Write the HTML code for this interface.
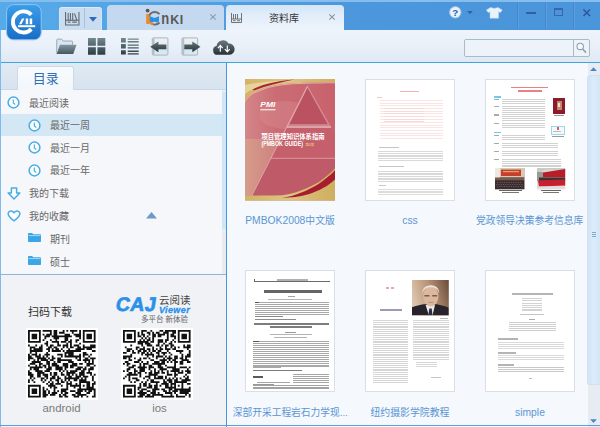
<!DOCTYPE html>
<html lang="zh-CN"><head><meta charset="utf-8"><title>CAJViewer</title>
<style>
html,body{margin:0;padding:0;}
body{width:600px;height:427px;overflow:hidden;background:#f4f8fc;font-family:"Liberation Sans","Noto Sans CJK SC",sans-serif;position:relative;}
#win{position:absolute;left:0;top:0;width:600px;height:427px;overflow:hidden;background:#f4f8fc;}
.abs{position:absolute;}
svg{position:absolute;overflow:visible;}
/* title bar */
#title{position:absolute;left:0;top:0;width:600px;height:30px;background:linear-gradient(90deg,#57aae8 0,#54a6e6 15%,#4d98dd 55%,#4a93da 100%);}
#title .hl{position:absolute;left:0;top:0;width:600px;height:1.5px;background:#84bdee;z-index:2;}
#ctrl{position:absolute;left:517px;top:1px;width:83px;height:28px;background:#4b95db;}
.vdiv{position:absolute;top:1px;width:1px;height:28px;background:#4388d0;box-shadow:1px 0 0 rgba(255,255,255,0.10);}
.tab{position:absolute;border-radius:4px 4px 0 0;}
#tab1{left:59px;top:7px;width:43px;height:23px;background:#c9dcf0;box-shadow:inset 0 1px 0 #dde9f6,inset 1px 0 0 #d6e4f3,inset -1px 0 0 #d6e4f3;}
#tab2{left:107px;top:5px;width:117px;height:25px;background:#c4d9ef;}
#tab3{left:226px;top:5px;width:118px;height:26px;background:linear-gradient(#d3e5f7,#e3eefa 45%,#eef4fb);}
#toolbar{position:absolute;left:0;top:30px;width:600px;height:32px;background:linear-gradient(#eef4fb,#e9f0f9 50%,#dfe9f4);}
#tline{position:absolute;left:0;top:61.5px;width:600px;height:1.5px;background:#3fa4e0;}
/* sidebar */
#side{position:absolute;left:0;top:63px;width:226px;height:364px;background:#f5f7fa;}
#sidehead{position:absolute;left:0;top:0;width:226px;height:26.5px;background:linear-gradient(#e0eaf3,#d7e3ef);border-bottom:1px solid #cad7e4;box-sizing:border-box;}
#mulu{position:absolute;left:17px;top:3px;width:56.5px;height:24px;text-indent:1px;background:linear-gradient(#f8fbfe,#f3f6fa);border-radius:3px 3px 0 0;border:1px solid #cfdae6;border-bottom:none;box-sizing:border-box;color:#2e6fb8;font-size:13px;line-height:23px;text-align:center;}
.row{position:absolute;left:1px;width:221px;height:22px;font-size:10px;color:#686868;line-height:22px;}
.row.sel{background:#d4e7f5;}
.row span{position:absolute;top:0;white-space:nowrap;}
#sidebot{position:absolute;left:0;top:211px;width:226px;height:153px;background:#f0f2f5;border-top:1px solid #8db5dd;}
#vline{position:absolute;left:226px;top:63px;width:1px;height:364px;background:#4a96dc;}
#strip{position:absolute;left:222px;top:27px;width:4px;height:184px;background:#e8ecf1;}
#thumb{position:absolute;left:222px;top:29px;width:4px;height:137px;background:#cfe6f7;border-radius:1px;}
/* main */
#main{position:absolute;left:227px;top:63px;width:373px;height:364px;background:#f5f8fc;}
.book{position:absolute;width:90px;height:122.4px;background:#fff;box-sizing:border-box;border:1px solid #d9dfe6;overflow:hidden;}
.lbl{position:absolute;font-size:10.3px;color:#5a96d4;white-space:nowrap;text-align:center;line-height:14px;}
#sb{position:absolute;left:587.5px;top:63px;width:12.5px;height:364px;background:#e7ecf2;}
#bline{position:absolute;left:0;top:424.7px;width:600px;height:1.8px;background:#5aa0dc;}
#lline{position:absolute;left:0;top:30px;width:1.3px;height:397px;background:#7fbaea;}
.book>div{filter:blur(0.45px);}

</style></head><body>
<div id="win">
<div id="title"><div class="hl"></div>
 <div id="ctrl"></div>
 <div class="vdiv" style="left:517px"></div><div class="vdiv" style="left:545px"></div><div class="vdiv" style="left:573px"></div>
 <!-- window buttons -->
 <div class="abs" style="left:526px;top:11.5px;width:10px;height:2px;background:#2f5fa8"></div>
 <div class="abs" style="left:554.4px;top:8px;width:8.6px;height:7.6px;border:1px solid #3566ae;border-top-width:2px;box-sizing:border-box"></div>
 <svg style="left:582.5px;top:8.5px" width="7.5" height="7.5" viewBox="0 0 8 8"><path d="M0.5 0.5L7.5 7.5M7.5 0.5L0.5 7.5" stroke="#2c569f" stroke-width="1.6" fill="none"/></svg>
 <!-- help -->
 <svg style="left:448.7px;top:5.8px" width="12.6" height="12.6" viewBox="0 0 11 11"><circle cx="5.5" cy="5.5" r="5" fill="#e8f1fb" stroke="#9cc4ea" stroke-width="0.8"/><text x="5.5" y="8.6" font-size="8.5" font-weight="bold" text-anchor="middle" fill="#2b5ea8" font-family="Liberation Sans, sans-serif">?</text></svg>
 <svg style="left:467.3px;top:11.4px" width="6" height="3.6" viewBox="0 0 6 4"><path d="M0 0h6l-3 3.5z" fill="#2f5fa8"/></svg>
 <!-- tshirt -->
 <svg style="left:486px;top:6.5px" width="16.6" height="11.6" viewBox="0 0 15 12" preserveAspectRatio="none"><path d="M4.5 0.3 L0.3 3 L2 5.8 L3.6 5 L3.6 11.6 L11.4 11.6 L11.4 5 L13 5.8 L14.7 3 L10.5 0.3 C9.6 1.6 5.4 1.6 4.5 0.3Z" fill="#e9f3fc" stroke="#b5d4ef" stroke-width="0.5"/></svg>
 <!-- tabs -->
 <div class="tab" id="tab1"></div>
 <div class="tab" id="tab2"></div>
 <div class="tab" id="tab3"></div>
</div>
<div id="toolbar"></div>
<div id="tline"></div>
<!-- tab1 content: shelf icon + dropdown -->
<svg style="left:65px;top:12px" width="14.5" height="13.6" viewBox="0 0 16 14" preserveAspectRatio="none"><g stroke="#636a70" stroke-width="1.2" fill="none"><path d="M0.6 0v13.4h14.8V0"/><path d="M0.6 8.5h14.8"/><path d="M3.5 1v7.5M6 1v7.5M8.5 1v7.5M10.5 1.5l2.5 7"/><path d="M3 10.5h3M8 10.5h5"/></g></svg>
<div class="abs" style="left:84px;top:8px;width:1px;height:20px;background:#a9c3de"></div>
<svg style="left:88.5px;top:17px" width="8" height="5.2" viewBox="0 0 8 5"><path d="M0 0h8l-4 4.6z" fill="#2f6cc0"/></svg>
<!-- tab2 content: cnki logo -->
<svg style="left:145px;top:7px" width="42" height="22" viewBox="0 0 42 22">
 <path d="M14.5 7.1 A6.3 6.3 0 1 0 14.5 15.5" fill="none" stroke="#6b6b6b" stroke-width="1.9"/>
 <path d="M3.8 13.2 A6.3 6.3 0 0 0 8.2 17.4" fill="none" stroke="#f08a24" stroke-width="2"/>
 <circle cx="2.6" cy="3.6" r="1.9" fill="#555"/>
 <rect x="1.2" y="7" width="2.9" height="10" rx="0.6" fill="#f08a24"/>
 <path d="M5 9.2 L9.5 11 L14 9.2 L14 14.6 L11.8 15.6 L9.5 14.4 L7.2 15.6 L5 14.6Z" fill="#2e8ee0"/>
 <g transform="translate(16.2,16.6) scale(1.12,1.42)"><text x="0" y="0" font-size="11.6" font-weight="bold" fill="#585858" font-family="Liberation Sans, sans-serif">n</text></g>
 <text x="25.2" y="16.6" font-size="12.4" font-weight="bold" fill="#585858" font-family="Liberation Sans, sans-serif" letter-spacing="0.6">KI</text>
</svg>
<svg style="left:210px;top:14px" width="6" height="6" viewBox="0 0 6 6"><path d="M0.3 0.3L5.7 5.7M5.7 0.3L0.3 5.7" stroke="#8a9bb0" stroke-width="1.1"/></svg>
<!-- tab3 content -->
<svg style="left:231px;top:12.6px" width="11" height="10" viewBox="0 0 11 10"><g stroke="#666" stroke-width="0.9" fill="none"><path d="M0.5 0v9.5h10V0"/><path d="M0.5 6h10"/><path d="M2.5 1v5M4.5 1v5M6.5 1v5"/><path d="M2 7.7h2.5M6 7.7h3"/></g></svg>
<div class="abs" style="left:269px;top:10px;font-size:10px;line-height:18px;color:#333;white-space:nowrap">资料库</div>
<svg style="left:329.4px;top:14.4px" width="6" height="6" viewBox="0 0 6 6"><path d="M0.3 0.3L5.7 5.7M5.7 0.3L0.3 5.7" stroke="#8a94a0" stroke-width="1.1"/></svg>
<!-- logo -->
<svg style="left:6px;top:4px" width="36" height="37" viewBox="0 0 36 37">
 <defs><linearGradient id="lg" x1="0" y1="0" x2="0" y2="1"><stop offset="0" stop-color="#3a9ee9"/><stop offset="1" stop-color="#1a6cc6"/></linearGradient></defs>
 <rect x="0.6" y="0.6" width="34.6" height="35.2" rx="7" fill="url(#lg)" stroke="#8fc4f0" stroke-width="1"/>
 <path d="M25.3 10.7 A10.6 10.6 0 1 0 25.3 25.1" fill="none" stroke="#fff" stroke-width="3.8"/>
 <path d="M12 22.2h17.2" stroke="#fff" stroke-width="2"/>
 <path d="M13 20.2 L16 14.6 L18.4 14.6 L15.4 20.2Z M19.7 14.6h2.5v5.6h-2.5z M23.7 14.6h2.5v5.6h-2.5z" fill="#fff"/>
</svg>
<!-- toolbar icons -->
<svg style="left:56px;top:37.5px" width="21" height="17" viewBox="0 0 23 18" preserveAspectRatio="none">
 <defs><linearGradient id="fg" x1="0" y1="0" x2="0" y2="1"><stop offset="0" stop-color="#8497a1"/><stop offset="1" stop-color="#44565f"/></linearGradient></defs>
 <path d="M0.8 16.5V2.2q0-1 1-1h4.4l1.6 2h9.4q1 0 1 1v3" fill="#d6e6f5" stroke="#98a4ac" stroke-width="1"/>
 <path d="M4.2 7.2h18.3l-3.6 9.8H0.8z" fill="url(#fg)"/>
</svg>
<svg style="left:88px;top:38px" width="17.3" height="16.8" viewBox="0 0 17.6 17.6" preserveAspectRatio="none">
 <defs><linearGradient id="gg" x1="0" y1="0" x2="0" y2="1"><stop offset="0" stop-color="#75888f"/><stop offset="1" stop-color="#2c3c44"/></linearGradient></defs>
 <path d="M0 0h8v8H0zM9.6 0h8v8h-8zM0 9.6h8v8H0zM9.6 9.6h8v8h-8z" fill="url(#gg)"/>
</svg>
<svg style="left:120.6px;top:38px" width="17.7" height="16.8" viewBox="0 0 18.4 17.6" preserveAspectRatio="none">
 <path d="M0 0h5v4.6H0zM0 6.4h5V11H0zM0 12.8h5v4.6H0z" fill="url(#gg)"/>
 <path d="M7 0.4h11.4v1.4H7zM7 3.2h11.4v1.4H7zM7 6.8h11.4v1.4H7zM7 9.6h11.4V11H7zM7 13.2h11.4v1.4H7zM7 16h11.4v1.4H7z" fill="url(#gg)"/>
</svg>
<svg style="left:150px;top:37px" width="20" height="19" viewBox="0 0 20 19">
 <defs><linearGradient id="ag" x1="0" y1="0" x2="0" y2="1"><stop offset="0" stop-color="#65747b"/><stop offset="1" stop-color="#27333a"/></linearGradient>
 <linearGradient id="pg" x1="0" y1="0" x2="0" y2="1"><stop offset="0" stop-color="#eef1f4"/><stop offset="0.55" stop-color="#e6ebf0"/><stop offset="0.6" stop-color="#d3e4f1"/><stop offset="1" stop-color="#dbe9f4"/></linearGradient></defs>
 <rect x="2.3" y="0.9" width="15.6" height="17.2" rx="1" fill="url(#pg)" stroke="#a4afb6" stroke-width="0.9"/>
 <rect x="2.6" y="1.3" width="1.9" height="16.4" fill="#b4bdc3"/>
 <path d="M0.2 9.8L8.4 4.4v3h8v4.9h-8v3z" fill="url(#ag)"/>
</svg>
<svg style="left:181px;top:37px" width="20" height="19" viewBox="0 0 20 19">
 <rect x="1" y="0.9" width="15.6" height="17.2" rx="1" fill="url(#pg)" stroke="#a4afb6" stroke-width="0.9"/>
 <rect x="1.3" y="1.3" width="1.9" height="16.4" fill="#b4bdc3"/>
 <path d="M19.5 9.8L11.3 4.4v3h-8v4.9h8v3z" fill="url(#ag)"/>
</svg>
<svg style="left:212px;top:38px" width="23" height="17" viewBox="0 0 23 17">
 <defs><linearGradient id="cg" x1="0" y1="0" x2="0" y2="1"><stop offset="0" stop-color="#6b7980"/><stop offset="1" stop-color="#263036"/></linearGradient></defs>
 <path d="M5.6 16.8a4.4 4.4 0 0 1-1-8.700000000000001A6.3 6.3 0 0 1 16.4 5.6a5.300000000000001 5.300000000000001 0 0 1 1.2 11.2z" fill="url(#cg)"/>
 <path d="M8.3 13.8V7.6M5.9 10.1L8.3 7.4l2.4 2.7M15.3 7.4v6.200000000000001M12.9 11.1l2.4 2.7 2.4-2.7" stroke="#fff" stroke-width="1.2" fill="none"/>
</svg>
<!-- search -->
<div class="abs" style="left:464px;top:39px;width:126px;height:18px;box-sizing:border-box;border:1px solid #a5bccb;border-radius:2px;background:#eef3f9"></div>
<div class="abs" style="left:573px;top:40px;width:1px;height:16px;background:#a5bccb"></div>
<svg style="left:576px;top:42px" width="11" height="12" viewBox="0 0 11 12"><circle cx="4.2" cy="4.4" r="3.2" fill="#f7fafc" stroke="#8ea0ad" stroke-width="1.1"/><path d="M6.6 7L10 10.6" stroke="#8ea0ad" stroke-width="1.6"/></svg>
<div id="side">
 <div id="sidehead"><div id="mulu">目录</div></div>
 <div id="strip"></div><div id="thumb"></div>
 <div class="row" style="top:29px"><span style="left:28px;top:1px">最近阅读</span></div>
 <div class="row sel" style="top:51px"><span style="left:49px;top:1px">最近一周</span></div>
 <div class="row" style="top:74px"><span style="left:49px;top:1px">最近一月</span></div>
 <div class="row" style="top:96px"><span style="left:49px;top:1px">最近一年</span></div>
 <div class="row" style="top:119px"><span style="left:28px;top:1px">我的下载</span></div>
 <div class="row" style="top:142px"><span style="left:28px;top:1px">我的收藏</span></div>
 <div class="row" style="top:164px"><span style="left:49px;top:2px">期刊</span></div>
 <div class="row" style="top:187px"><span style="left:49px;top:2px">硕士</span></div>
 <!-- clocks -->
 <svg style="left:7px;top:33px" width="13" height="13" viewBox="0 0 13 13"><circle cx="6.5" cy="6.5" r="5.4" fill="#fff" stroke="#46aee6" stroke-width="1.5"/><path d="M6.3 3.4v3.6l2 1.4" stroke="#46aee6" stroke-width="1.2" fill="none"/></svg>
 <svg style="left:28px;top:56px" width="13" height="13" viewBox="0 0 13 13"><circle cx="6.5" cy="6.5" r="5.4" fill="#fff" stroke="#46aee6" stroke-width="1.5"/><path d="M6.3 3.4v3.6l2 1.4" stroke="#46aee6" stroke-width="1.2" fill="none"/></svg>
 <svg style="left:28px;top:78px" width="13" height="13" viewBox="0 0 13 13"><circle cx="6.5" cy="6.5" r="5.4" fill="#fff" stroke="#46aee6" stroke-width="1.5"/><path d="M6.3 3.4v3.6l2 1.4" stroke="#46aee6" stroke-width="1.2" fill="none"/></svg>
 <svg style="left:28px;top:101px" width="13" height="13" viewBox="0 0 13 13"><circle cx="6.5" cy="6.5" r="5.4" fill="#fff" stroke="#46aee6" stroke-width="1.5"/><path d="M6.3 3.4v3.6l2 1.4" stroke="#46aee6" stroke-width="1.2" fill="none"/></svg>
 <!-- download -->
 <svg style="left:7px;top:124px" width="14" height="13" viewBox="0 0 14 13"><path d="M4.4 0.9h5.2v5h3.2L7 12 1.2 5.9h3.2z" fill="#fff" stroke="#46aee6" stroke-width="1.5" stroke-linejoin="round"/></svg>
 <!-- heart -->
 <svg style="left:7px;top:147px" width="14" height="12" viewBox="0 0 14 12"><path d="M7 10.8C1 6.6 0.6 3.8 1.6 2.2 2.8 0.4 5.6 0.4 7 2.8 8.4 0.4 11.2 0.4 12.4 2.2 13.4 3.8 13 6.6 7 10.8z" fill="#fff" stroke="#46aee6" stroke-width="1.5" stroke-linejoin="round"/></svg>
 <svg style="left:146px;top:149px" width="11" height="7" viewBox="0 0 11 7"><path d="M0 6.6L5.5 0 11 6.6z" fill="#6d9acb"/></svg>
 <!-- folders -->
 <svg style="left:28px;top:170px" width="13" height="9" viewBox="0 0 13 9"><path d="M0 0.8q0-.8.8-.8h3.4l1 1.2h7q.8 0 .8.8v6.200000000000001q0 .8-.8.8H.8q-.8 0-.8-.8z" fill="#3aa6e6"/><path d="M0.6 2.6h11.8" stroke="#bfe3f8" stroke-width="0.8"/></svg>
 <svg style="left:28px;top:193px" width="13" height="9" viewBox="0 0 13 9"><path d="M0 0.8q0-.8.8-.8h3.4l1 1.2h7q.8 0 .8.8v6.200000000000001q0 .8-.8.8H.8q-.8 0-.8-.8z" fill="#3aa6e6"/><path d="M0.6 2.6h11.8" stroke="#bfe3f8" stroke-width="0.8"/></svg>
 <div id="sidebot">
  <div class="abs" style="left:28px;top:29px;font-size:11px;line-height:16px;color:#333;white-space:nowrap">扫码下载</div>
  <div class="abs" style="left:116px;top:17px;font-size:19.5px;line-height:24px;font-weight:bold;color:#2a90ea;white-space:nowrap;letter-spacing:0.6px;-webkit-text-stroke:0.7px #2a90ea;transform:skewX(-9deg)">CAJ</div>
  <div class="abs" style="left:159px;top:18px;font-size:10.5px;line-height:14px;color:#444;white-space:nowrap">云阅读</div>
  <div class="abs" style="left:159px;top:30px;font-size:9px;line-height:10px;font-weight:bold;font-style:italic;color:#2a90ea;white-space:nowrap;letter-spacing:0.4px;-webkit-text-stroke:0.3px #2a90ea">Viewer</div>
  <div class="abs" style="left:141px;top:40px;font-size:7.5px;line-height:10px;color:#666;white-space:nowrap">多平台 新体验</div>
  <div class="abs" style="left:26px;top:53px;width:72px;height:72px;background:#fff"></div>
  <svg style="left:28.2px;top:55.2px" width="67.6" height="67.6" viewBox="0 0 37 37"><path d="M0 0h7v1h-7zM8 0h5v1h-5zM14 0h2v1h-2zM19 0h1v1h-1zM21 0h1v1h-1zM23 0h4v1h-4zM28 0h1v1h-1zM30 0h7v1h-7zM0 1h1v1h-1zM6 1h1v1h-1zM12 1h1v1h-1zM14 1h2v1h-2zM17 1h3v1h-3zM24 1h1v1h-1zM28 1h1v1h-1zM30 1h1v1h-1zM36 1h1v1h-1zM0 2h1v1h-1zM2 2h3v1h-3zM6 2h1v1h-1zM8 2h1v1h-1zM10 2h3v1h-3zM14 2h2v1h-2zM20 2h3v1h-3zM25 2h4v1h-4zM30 2h1v1h-1zM32 2h3v1h-3zM36 2h1v1h-1zM0 3h1v1h-1zM2 3h3v1h-3zM6 3h1v1h-1zM9 3h3v1h-3zM13 3h11v1h-11zM26 3h3v1h-3zM30 3h1v1h-1zM32 3h3v1h-3zM36 3h1v1h-1zM0 4h1v1h-1zM2 4h3v1h-3zM6 4h1v1h-1zM9 4h1v1h-1zM14 4h3v1h-3zM20 4h2v1h-2zM28 4h1v1h-1zM30 4h1v1h-1zM32 4h3v1h-3zM36 4h1v1h-1zM0 5h1v1h-1zM6 5h1v1h-1zM8 5h1v1h-1zM12 5h1v1h-1zM15 5h1v1h-1zM20 5h2v1h-2zM23 5h1v1h-1zM26 5h2v1h-2zM30 5h1v1h-1zM36 5h1v1h-1zM0 6h7v1h-7zM10 6h1v1h-1zM13 6h4v1h-4zM18 6h3v1h-3zM22 6h2v1h-2zM26 6h1v1h-1zM30 6h7v1h-7zM9 7h2v1h-2zM16 7h1v1h-1zM21 7h1v1h-1zM23 7h1v1h-1zM28 7h1v1h-1zM0 8h1v1h-1zM4 8h1v1h-1zM7 8h1v1h-1zM10 8h1v1h-1zM12 8h2v1h-2zM16 8h2v1h-2zM19 8h3v1h-3zM23 8h1v1h-1zM25 8h3v1h-3zM30 8h1v1h-1zM34 8h3v1h-3zM1 9h3v1h-3zM6 9h2v1h-2zM11 9h2v1h-2zM14 9h2v1h-2zM19 9h1v1h-1zM21 9h1v1h-1zM23 9h2v1h-2zM27 9h2v1h-2zM30 9h7v1h-7zM1 10h1v1h-1zM3 10h5v1h-5zM10 10h2v1h-2zM13 10h1v1h-1zM15 10h2v1h-2zM18 10h1v1h-1zM22 10h1v1h-1zM26 10h5v1h-5zM32 10h3v1h-3zM1 11h7v1h-7zM11 11h1v1h-1zM13 11h5v1h-5zM19 11h1v1h-1zM21 11h8v1h-8zM35 11h2v1h-2zM1 12h1v1h-1zM4 12h1v1h-1zM10 12h1v1h-1zM20 12h5v1h-5zM30 12h2v1h-2zM0 13h1v1h-1zM2 13h3v1h-3zM6 13h1v1h-1zM9 13h3v1h-3zM16 13h3v1h-3zM20 13h1v1h-1zM22 13h3v1h-3zM28 13h1v1h-1zM30 13h3v1h-3zM34 13h1v1h-1zM0 14h2v1h-2zM4 14h3v1h-3zM8 14h1v1h-1zM10 14h1v1h-1zM13 14h1v1h-1zM18 14h1v1h-1zM20 14h9v1h-9zM30 14h1v1h-1zM33 14h1v1h-1zM0 15h3v1h-3zM5 15h5v1h-5zM11 15h1v1h-1zM13 15h2v1h-2zM16 15h2v1h-2zM26 15h1v1h-1zM28 15h1v1h-1zM31 15h2v1h-2zM34 15h3v1h-3zM0 16h1v1h-1zM3 16h1v1h-1zM5 16h1v1h-1zM7 16h4v1h-4zM12 16h2v1h-2zM16 16h8v1h-8zM27 16h2v1h-2zM30 16h4v1h-4zM35 16h1v1h-1zM2 17h5v1h-5zM10 17h2v1h-2zM14 17h1v1h-1zM16 17h2v1h-2zM22 17h3v1h-3zM31 17h1v1h-1zM33 17h1v1h-1zM35 17h1v1h-1zM1 18h3v1h-3zM6 18h2v1h-2zM10 18h2v1h-2zM13 18h3v1h-3zM19 18h3v1h-3zM24 18h3v1h-3zM28 18h2v1h-2zM32 18h4v1h-4zM0 19h1v1h-1zM4 19h1v1h-1zM6 19h1v1h-1zM8 19h2v1h-2zM11 19h1v1h-1zM13 19h4v1h-4zM19 19h3v1h-3zM23 19h4v1h-4zM32 19h2v1h-2zM36 19h1v1h-1zM1 20h7v1h-7zM9 20h1v1h-1zM11 20h2v1h-2zM15 20h4v1h-4zM20 20h2v1h-2zM23 20h2v1h-2zM27 20h3v1h-3zM31 20h1v1h-1zM34 20h2v1h-2zM1 21h1v1h-1zM3 21h3v1h-3zM10 21h3v1h-3zM15 21h4v1h-4zM20 21h1v1h-1zM26 21h3v1h-3zM30 21h2v1h-2zM33 21h3v1h-3zM0 22h1v1h-1zM4 22h4v1h-4zM9 22h3v1h-3zM17 22h1v1h-1zM19 22h1v1h-1zM21 22h1v1h-1zM23 22h4v1h-4zM29 22h2v1h-2zM33 22h1v1h-1zM0 23h2v1h-2zM5 23h4v1h-4zM12 23h1v1h-1zM14 23h2v1h-2zM18 23h1v1h-1zM21 23h5v1h-5zM28 23h3v1h-3zM32 23h3v1h-3zM0 24h3v1h-3zM5 24h2v1h-2zM8 24h3v1h-3zM12 24h1v1h-1zM14 24h2v1h-2zM18 24h2v1h-2zM21 24h2v1h-2zM24 24h1v1h-1zM26 24h1v1h-1zM28 24h3v1h-3zM34 24h1v1h-1zM36 24h1v1h-1zM1 25h2v1h-2zM5 25h2v1h-2zM9 25h2v1h-2zM13 25h2v1h-2zM16 25h1v1h-1zM20 25h1v1h-1zM22 25h2v1h-2zM26 25h3v1h-3zM30 25h3v1h-3zM35 25h1v1h-1zM1 26h1v1h-1zM3 26h1v1h-1zM7 26h2v1h-2zM10 26h1v1h-1zM12 26h3v1h-3zM16 26h2v1h-2zM20 26h8v1h-8zM29 26h1v1h-1zM31 26h1v1h-1zM35 26h1v1h-1zM0 27h1v1h-1zM2 27h1v1h-1zM7 27h1v1h-1zM9 27h1v1h-1zM12 27h1v1h-1zM15 27h2v1h-2zM18 27h1v1h-1zM20 27h1v1h-1zM22 27h1v1h-1zM25 27h2v1h-2zM28 27h4v1h-4zM35 27h1v1h-1zM0 28h1v1h-1zM3 28h1v1h-1zM8 28h1v1h-1zM11 28h1v1h-1zM13 28h1v1h-1zM16 28h1v1h-1zM18 28h2v1h-2zM21 28h1v1h-1zM23 28h1v1h-1zM28 28h6v1h-6zM36 28h1v1h-1zM10 29h1v1h-1zM12 29h2v1h-2zM15 29h3v1h-3zM21 29h3v1h-3zM26 29h1v1h-1zM28 29h1v1h-1zM32 29h2v1h-2zM35 29h2v1h-2zM0 30h7v1h-7zM11 30h4v1h-4zM18 30h1v1h-1zM21 30h1v1h-1zM23 30h6v1h-6zM30 30h1v1h-1zM32 30h2v1h-2zM35 30h1v1h-1zM0 31h1v1h-1zM6 31h1v1h-1zM8 31h1v1h-1zM12 31h1v1h-1zM14 31h2v1h-2zM21 31h1v1h-1zM25 31h1v1h-1zM28 31h1v1h-1zM32 31h4v1h-4zM0 32h1v1h-1zM2 32h3v1h-3zM6 32h1v1h-1zM8 32h1v1h-1zM10 32h1v1h-1zM14 32h1v1h-1zM18 32h4v1h-4zM27 32h10v1h-10zM0 33h1v1h-1zM2 33h3v1h-3zM6 33h1v1h-1zM8 33h2v1h-2zM11 33h1v1h-1zM14 33h1v1h-1zM16 33h1v1h-1zM18 33h3v1h-3zM23 33h3v1h-3zM27 33h3v1h-3zM31 33h1v1h-1zM33 33h2v1h-2zM36 33h1v1h-1zM0 34h1v1h-1zM2 34h3v1h-3zM6 34h1v1h-1zM8 34h2v1h-2zM11 34h1v1h-1zM13 34h3v1h-3zM18 34h1v1h-1zM20 34h2v1h-2zM26 34h3v1h-3zM32 34h2v1h-2zM36 34h1v1h-1zM0 35h1v1h-1zM6 35h1v1h-1zM8 35h3v1h-3zM12 35h3v1h-3zM17 35h1v1h-1zM19 35h2v1h-2zM24 35h2v1h-2zM27 35h5v1h-5zM36 35h1v1h-1zM0 36h7v1h-7zM8 36h2v1h-2zM17 36h2v1h-2zM20 36h2v1h-2zM25 36h3v1h-3zM29 36h1v1h-1zM32 36h1v1h-1zM35 36h2v1h-2z" fill="#111"/></svg>
  <div class="abs" style="left:121px;top:53px;width:72px;height:72px;background:#fff"></div>
  <svg style="left:123.2px;top:55.2px" width="67.6" height="67.6" viewBox="0 0 37 37"><path d="M0 0h7v1h-7zM10 0h3v1h-3zM15 0h1v1h-1zM20 0h2v1h-2zM23 0h6v1h-6zM30 0h7v1h-7zM0 1h1v1h-1zM6 1h1v1h-1zM8 1h1v1h-1zM10 1h1v1h-1zM13 1h2v1h-2zM16 1h1v1h-1zM18 1h2v1h-2zM22 1h3v1h-3zM27 1h2v1h-2zM30 1h1v1h-1zM36 1h1v1h-1zM0 2h1v1h-1zM2 2h3v1h-3zM6 2h1v1h-1zM8 2h1v1h-1zM10 2h2v1h-2zM14 2h1v1h-1zM16 2h2v1h-2zM19 2h4v1h-4zM24 2h1v1h-1zM26 2h2v1h-2zM30 2h1v1h-1zM32 2h3v1h-3zM36 2h1v1h-1zM0 3h1v1h-1zM2 3h3v1h-3zM6 3h1v1h-1zM8 3h2v1h-2zM11 3h1v1h-1zM13 3h1v1h-1zM16 3h2v1h-2zM19 3h2v1h-2zM24 3h1v1h-1zM26 3h3v1h-3zM30 3h1v1h-1zM32 3h3v1h-3zM36 3h1v1h-1zM0 4h1v1h-1zM2 4h3v1h-3zM6 4h1v1h-1zM10 4h1v1h-1zM12 4h1v1h-1zM14 4h1v1h-1zM16 4h1v1h-1zM24 4h1v1h-1zM28 4h1v1h-1zM30 4h1v1h-1zM32 4h3v1h-3zM36 4h1v1h-1zM0 5h1v1h-1zM6 5h1v1h-1zM9 5h1v1h-1zM11 5h1v1h-1zM13 5h2v1h-2zM16 5h1v1h-1zM19 5h3v1h-3zM23 5h2v1h-2zM27 5h1v1h-1zM30 5h1v1h-1zM36 5h1v1h-1zM0 6h7v1h-7zM8 6h6v1h-6zM15 6h2v1h-2zM19 6h3v1h-3zM23 6h1v1h-1zM26 6h1v1h-1zM28 6h1v1h-1zM30 6h7v1h-7zM8 7h3v1h-3zM12 7h3v1h-3zM19 7h1v1h-1zM22 7h1v1h-1zM25 7h2v1h-2zM4 8h1v1h-1zM10 8h1v1h-1zM13 8h3v1h-3zM18 8h2v1h-2zM21 8h1v1h-1zM23 8h2v1h-2zM26 8h2v1h-2zM33 8h1v1h-1zM35 8h2v1h-2zM1 9h1v1h-1zM7 9h2v1h-2zM11 9h1v1h-1zM16 9h1v1h-1zM20 9h1v1h-1zM23 9h1v1h-1zM26 9h1v1h-1zM28 9h1v1h-1zM30 9h1v1h-1zM33 9h4v1h-4zM2 10h3v1h-3zM7 10h1v1h-1zM9 10h3v1h-3zM13 10h2v1h-2zM16 10h1v1h-1zM18 10h1v1h-1zM20 10h2v1h-2zM23 10h3v1h-3zM27 10h2v1h-2zM35 10h1v1h-1zM2 11h2v1h-2zM5 11h1v1h-1zM8 11h2v1h-2zM11 11h2v1h-2zM14 11h1v1h-1zM16 11h2v1h-2zM19 11h2v1h-2zM24 11h1v1h-1zM29 11h4v1h-4zM36 11h1v1h-1zM0 12h2v1h-2zM5 12h2v1h-2zM8 12h1v1h-1zM10 12h2v1h-2zM13 12h1v1h-1zM15 12h1v1h-1zM18 12h2v1h-2zM21 12h3v1h-3zM25 12h1v1h-1zM31 12h1v1h-1zM36 12h1v1h-1zM4 13h1v1h-1zM10 13h1v1h-1zM12 13h5v1h-5zM19 13h1v1h-1zM22 13h1v1h-1zM26 13h1v1h-1zM32 13h1v1h-1zM35 13h2v1h-2zM0 14h5v1h-5zM13 14h1v1h-1zM16 14h1v1h-1zM18 14h4v1h-4zM23 14h1v1h-1zM25 14h1v1h-1zM28 14h2v1h-2zM32 14h1v1h-1zM34 14h3v1h-3zM0 15h2v1h-2zM3 15h1v1h-1zM6 15h1v1h-1zM9 15h1v1h-1zM11 15h2v1h-2zM14 15h1v1h-1zM18 15h1v1h-1zM22 15h1v1h-1zM24 15h3v1h-3zM28 15h2v1h-2zM31 15h2v1h-2zM34 15h1v1h-1zM3 16h2v1h-2zM8 16h2v1h-2zM15 16h2v1h-2zM20 16h4v1h-4zM25 16h1v1h-1zM27 16h2v1h-2zM32 16h4v1h-4zM1 17h2v1h-2zM6 17h3v1h-3zM10 17h1v1h-1zM13 17h1v1h-1zM17 17h3v1h-3zM21 17h2v1h-2zM24 17h1v1h-1zM26 17h1v1h-1zM28 17h2v1h-2zM31 17h2v1h-2zM35 17h2v1h-2zM0 18h1v1h-1zM2 18h2v1h-2zM9 18h1v1h-1zM11 18h3v1h-3zM16 18h7v1h-7zM28 18h1v1h-1zM31 18h2v1h-2zM2 19h1v1h-1zM5 19h2v1h-2zM9 19h1v1h-1zM11 19h1v1h-1zM14 19h2v1h-2zM19 19h2v1h-2zM23 19h1v1h-1zM28 19h1v1h-1zM3 20h3v1h-3zM8 20h5v1h-5zM14 20h3v1h-3zM19 20h3v1h-3zM24 20h5v1h-5zM31 20h4v1h-4zM36 20h1v1h-1zM2 21h2v1h-2zM6 21h1v1h-1zM9 21h3v1h-3zM14 21h1v1h-1zM17 21h1v1h-1zM20 21h4v1h-4zM27 21h4v1h-4zM35 21h1v1h-1zM0 22h1v1h-1zM2 22h1v1h-1zM6 22h2v1h-2zM9 22h3v1h-3zM15 22h1v1h-1zM17 22h1v1h-1zM19 22h1v1h-1zM21 22h1v1h-1zM24 22h1v1h-1zM26 22h5v1h-5zM32 22h1v1h-1zM34 22h3v1h-3zM3 23h2v1h-2zM6 23h1v1h-1zM8 23h2v1h-2zM12 23h1v1h-1zM14 23h2v1h-2zM17 23h3v1h-3zM21 23h2v1h-2zM24 23h1v1h-1zM28 23h1v1h-1zM30 23h3v1h-3zM35 23h2v1h-2zM2 24h6v1h-6zM9 24h1v1h-1zM14 24h5v1h-5zM24 24h3v1h-3zM28 24h2v1h-2zM34 24h1v1h-1zM1 25h1v1h-1zM3 25h1v1h-1zM9 25h1v1h-1zM12 25h3v1h-3zM17 25h1v1h-1zM19 25h3v1h-3zM23 25h1v1h-1zM28 25h1v1h-1zM33 25h1v1h-1zM35 25h1v1h-1zM0 26h1v1h-1zM3 26h1v1h-1zM5 26h3v1h-3zM11 26h1v1h-1zM14 26h1v1h-1zM17 26h5v1h-5zM23 26h1v1h-1zM25 26h1v1h-1zM27 26h1v1h-1zM29 26h1v1h-1zM31 26h1v1h-1zM34 26h2v1h-2zM3 27h1v1h-1zM7 27h2v1h-2zM13 27h1v1h-1zM15 27h2v1h-2zM22 27h1v1h-1zM24 27h3v1h-3zM28 27h2v1h-2zM32 27h5v1h-5zM4 28h1v1h-1zM6 28h1v1h-1zM10 28h1v1h-1zM12 28h1v1h-1zM15 28h5v1h-5zM22 28h2v1h-2zM25 28h2v1h-2zM28 28h7v1h-7zM9 29h1v1h-1zM11 29h2v1h-2zM14 29h1v1h-1zM18 29h1v1h-1zM21 29h4v1h-4zM26 29h3v1h-3zM32 29h1v1h-1zM35 29h2v1h-2zM0 30h7v1h-7zM9 30h1v1h-1zM11 30h2v1h-2zM14 30h2v1h-2zM17 30h2v1h-2zM20 30h1v1h-1zM23 30h2v1h-2zM26 30h1v1h-1zM28 30h1v1h-1zM30 30h1v1h-1zM32 30h1v1h-1zM0 31h1v1h-1zM6 31h1v1h-1zM8 31h2v1h-2zM13 31h3v1h-3zM17 31h2v1h-2zM23 31h6v1h-6zM32 31h1v1h-1zM36 31h1v1h-1zM0 32h1v1h-1zM2 32h3v1h-3zM6 32h1v1h-1zM8 32h1v1h-1zM10 32h3v1h-3zM16 32h4v1h-4zM21 32h2v1h-2zM25 32h2v1h-2zM28 32h9v1h-9zM0 33h1v1h-1zM2 33h3v1h-3zM6 33h1v1h-1zM9 33h2v1h-2zM13 33h2v1h-2zM16 33h2v1h-2zM22 33h2v1h-2zM25 33h1v1h-1zM27 33h3v1h-3zM31 33h6v1h-6zM0 34h1v1h-1zM2 34h3v1h-3zM6 34h1v1h-1zM8 34h5v1h-5zM15 34h3v1h-3zM19 34h1v1h-1zM23 34h4v1h-4zM28 34h1v1h-1zM31 34h5v1h-5zM0 35h1v1h-1zM6 35h1v1h-1zM9 35h3v1h-3zM13 35h2v1h-2zM16 35h6v1h-6zM26 35h1v1h-1zM29 35h1v1h-1zM34 35h1v1h-1zM36 35h1v1h-1zM0 36h7v1h-7zM8 36h3v1h-3zM12 36h5v1h-5zM21 36h7v1h-7zM29 36h5v1h-5zM36 36h1v1h-1z" fill="#111"/></svg>
  <div class="abs" style="left:25.5px;top:126px;width:72px;font-size:11.4px;line-height:14px;color:#7a7a7a;text-align:center">android</div>
  <div class="abs" style="left:123.5px;top:126px;width:72px;font-size:11.4px;line-height:14px;color:#7a7a7a;text-align:center">ios</div>
 </div>
</div>
<div id="vline"></div>
<div id="main">
<div class="lbl" style="left:-7px;width:140px;top:151px;font-size:10.3px">PMBOK2008<span style="font-size:9.8px">中文版</span></div>
<div class="lbl" style="left:113px;width:140px;top:151px;font-size:10.3px">css</div>
<div class="lbl" style="left:232.6px;width:140px;top:151px;font-size:9.76px">党政领导决策参考信息库</div>
<div class="lbl" style="left:-6.7px;width:140px;top:343px;font-size:9.72px">深部开采工程岩石力学现...</div>
<div class="lbl" style="left:113px;width:140px;top:343px;font-size:9.9px">纽约摄影学院教程</div>
<div class="lbl" style="left:233px;width:140px;top:343px;font-size:10.3px">simple</div>
<svg style="left:18px;top:15.7px" width="90" height="121.8" viewBox="0 0 90 122" preserveAspectRatio="none">
<defs>
<linearGradient id="pk" x1="0" y1="0" x2="1" y2="0"><stop offset="0" stop-color="#d4888a"/><stop offset="0.35" stop-color="#cb6c74"/><stop offset="1" stop-color="#c8626c"/></linearGradient>
<linearGradient id="tn" x1="0" y1="0" x2="1" y2="0"><stop offset="0" stop-color="#d69c8a"/><stop offset="1" stop-color="#cd7e7e"/></linearGradient>
<linearGradient id="gd" x1="0" y1="0" x2="1" y2="0"><stop offset="0" stop-color="#d3b466"/><stop offset="0.5" stop-color="#dcc482"/><stop offset="1" stop-color="#cfae5e"/></linearGradient>
<clipPath id="cc"><rect x="0" y="0" width="90" height="122"/></clipPath>
</defs>
<g clip-path="url(#cc)"><g style="filter:blur(0.4px)">
<rect x="-2" y="-2" width="94" height="126" fill="url(#pk)"/>
<path d="M0 60 L36 60 L7.2 116.2 L0 117Z" fill="url(#tn)"/>
<ellipse cx="40" cy="36" rx="26" ry="14" fill="#d88a8e" opacity="0.45"/>
<path d="M62.4 7.5 L90 56.7 V122 H4.2 Z" fill="#c45f6b"/>
<path d="M62.4 7.5 L84 46 H43.2Z" fill="#ba5261" stroke="#d68e94" stroke-width="1.3" stroke-linejoin="round"/>
<path d="M41.6 48 H86" stroke="#dca4a8" stroke-width="2.2"/>
<path d="M25.6 79.4 H90 V122 H4Z" fill="#bf5b68"/>
<path d="M25.6 79.4 H90" stroke="#e0a2a6" stroke-width="0.9"/>
<path d="M62.4 7.5 L4.2 122" stroke="#e3aeb0" stroke-width="0.9" fill="none"/>
<path d="M0 0 H90 V3.3 C70 3.5 50 4 37.5 5.2 C27 6.3 17.5 9.2 7.5 14.2 C4 16.5 1.5 19.5 0 22Z" fill="url(#gd)"/>
<path d="M0 6 C14 3 30 1.6 50 1.4 C34 3 18 6 6 11 C3 12.5 1 14 0 15Z" fill="#ecdcae" opacity="0.75"/>
<path d="M7.5 10.6 C15 6.3 27 2.4 49.5 0.5 C35 3.2 22 6.6 9 11.6Z" fill="#a82436"/>
<path d="M0 22 C1.5 19.5 4 16.5 7.5 14.2 C17.5 9.2 27 6.3 37.5 5.2 C50 4 70 3.5 90 3.3 V4.3 C70 4.5 50 5 37.5 6.2 C27 7.3 17.5 10.2 7.5 15.4 C4 17.8 1.5 21 0 23.800000000000001Z" fill="#e6aea8"/>
<path d="M0 117 C14 116.6 26 117 37 116.5 C50 115 62 110 73.6 103.5 C80 99 86 94 90 89.5 V122 H0Z" fill="url(#gd)"/>
<path d="M37 119 C50 117.5 62 112 73.6 105.2 C80 100.5 86 96 90 91.4 V100.6 C86 104 82 107 79 108.8 C74 111.5 70 113.5 64.4 115.2 C55 118 46 119 37 119Z" fill="#a81c30"/>
</g>
<text x="15.3" y="27.6" font-size="6.4" font-weight="bold" fill="#fff" font-family="Liberation Sans, sans-serif" font-style="italic" textLength="15.2" lengthAdjust="spacingAndGlyphs">PMI</text>
<rect x="15.3" y="30.1" width="15.2" height="1.3" fill="#f6e2e2"/>
<text x="16.4" y="60" font-size="6.8" font-weight="bold" fill="#fff" font-family="Liberation Sans, Noto Sans CJK SC, sans-serif" textLength="63.2" lengthAdjust="spacingAndGlyphs">项目管理知识体系指南</text>
<text x="16.4" y="67.6" font-size="6.6" font-weight="bold" fill="#fff" font-family="Liberation Sans, sans-serif" textLength="41.6" lengthAdjust="spacingAndGlyphs">(PMBOK GUIDE)</text>
<text x="60.4" y="66.8" font-size="3.4" fill="#f0d68a" font-family="Liberation Sans, Noto Sans CJK SC, sans-serif">第4版</text>
</g></svg>
<div class="book" style="left:138px;top:15.7px"><div class="abs" style="left:34px;top:11px;width:19px;height:1.6px;background:#f2b0b0;"></div><div class="abs" style="left:11px;top:17px;width:5px;height:1px;background:#f6c4c4;"></div><div class="abs" style="left:14px;top:20px;width:63px;height:22px;background:repeating-linear-gradient(180deg,#fbe4e4 0,#fbe4e4 1px,transparent 1px,transparent 2.7px);"></div><div class="abs" style="left:18px;top:28px;width:40px;height:14px;background:repeating-linear-gradient(180deg,#f9d8d8 0,#f9d8d8 1px,transparent 1px,transparent 2.7px);"></div><div class="abs" style="left:14px;top:42px;width:63px;height:19px;background:repeating-linear-gradient(180deg,#fbe4e4 0,#fbe4e4 1px,transparent 1px,transparent 2.7px);"></div><div class="abs" style="left:13px;top:67px;width:20px;height:1.6px;background:#c4c4c4;"></div><div class="abs" style="left:12px;top:71px;width:65px;height:11px;background:repeating-linear-gradient(180deg,#d9d9d9 0,#d9d9d9 1.2px,transparent 1.2px,transparent 2.2px);"></div><div class="abs" style="left:13px;top:86px;width:25px;height:1.6px;background:#c4c4c4;"></div><div class="abs" style="left:12px;top:91px;width:65px;height:12px;background:repeating-linear-gradient(180deg,#d9d9d9 0,#d9d9d9 1.3px,transparent 1.3px,transparent 2.4px);"></div><div class="abs" style="left:13px;top:105px;width:7px;height:1.6px;background:#cacaca;"></div><div class="abs" style="left:12px;top:109px;width:65px;height:6px;background:repeating-linear-gradient(180deg,#dcdcdc 0,#dcdcdc 1.3px,transparent 1.3px,transparent 2.4px);"></div></div>
<div class="book" style="left:258px;top:15.7px"><div class="abs" style="left:25px;top:6.8999999999999915px;width:37px;height:1.7px;background:#ea8080;"></div><div class="abs" style="left:32px;top:10.5px;width:24px;height:1.7px;background:#ea8080;"></div><div class="abs" style="left:7.600000000000023px;top:16.5px;width:7px;height:1.6px;background:#6ccdea;"></div><div class="abs" style="left:15.5px;top:19.099999999999994px;width:43.5px;height:6.449999999999999px;background:repeating-linear-gradient(180deg,#d2d2d2 0,#d2d2d2 1.15px,transparent 1.15px,transparent 2.15px);"></div><div class="abs" style="left:7.600000000000023px;top:19.099999999999994px;width:5.8px;height:1.3px;background:#aaa;"></div><div class="abs" style="left:15.5px;top:26.5px;width:43.5px;height:6.449999999999999px;background:repeating-linear-gradient(180deg,#d2d2d2 0,#d2d2d2 1.15px,transparent 1.15px,transparent 2.15px);"></div><div class="abs" style="left:7.600000000000023px;top:26.5px;width:5.8px;height:1.3px;background:#aaa;"></div><div class="abs" style="left:15.5px;top:34.8px;width:43.5px;height:6.449999999999999px;background:repeating-linear-gradient(180deg,#d2d2d2 0,#d2d2d2 1.15px,transparent 1.15px,transparent 2.15px);"></div><div class="abs" style="left:7.600000000000023px;top:34.8px;width:5.8px;height:1.3px;background:#aaa;"></div><div class="abs" style="left:15.5px;top:43.2px;width:43.5px;height:6.449999999999999px;background:repeating-linear-gradient(180deg,#d2d2d2 0,#d2d2d2 1.15px,transparent 1.15px,transparent 2.15px);"></div><div class="abs" style="left:7.600000000000023px;top:43.2px;width:5.8px;height:1.3px;background:#aaa;"></div><div class="abs" style="left:7.600000000000023px;top:52.2px;width:7px;height:1.6px;background:#6ccdea;"></div><div class="abs" style="left:15.5px;top:55.10000000000001px;width:43.5px;height:6.449999999999999px;background:repeating-linear-gradient(180deg,#d2d2d2 0,#d2d2d2 1.15px,transparent 1.15px,transparent 2.15px);"></div><div class="abs" style="left:7.600000000000023px;top:55.10000000000001px;width:5.8px;height:1.3px;background:#aaa;"></div><div class="abs" style="left:15.5px;top:62.999999999999986px;width:56.5px;height:6.449999999999999px;background:repeating-linear-gradient(180deg,#d2d2d2 0,#d2d2d2 1.15px,transparent 1.15px,transparent 2.15px);"></div><div class="abs" style="left:7.600000000000023px;top:62.999999999999986px;width:5.8px;height:1.3px;background:#aaa;"></div><div class="abs" style="left:15.5px;top:71.3px;width:56.5px;height:6.449999999999999px;background:repeating-linear-gradient(180deg,#d2d2d2 0,#d2d2d2 1.15px,transparent 1.15px,transparent 2.15px);"></div><div class="abs" style="left:7.600000000000023px;top:71.3px;width:5.8px;height:1.3px;background:#aaa;"></div><div class="abs" style="left:15.5px;top:79.49999999999999px;width:59.5px;height:8.6px;background:repeating-linear-gradient(180deg,#d2d2d2 0,#d2d2d2 1.15px,transparent 1.15px,transparent 2.15px);"></div><div class="abs" style="left:7.600000000000023px;top:79.49999999999999px;width:5.8px;height:1.3px;background:#aaa;"></div><div class="abs" style="left:67px;top:18.39999999999999px;width:12.2px;height:16.2px;background:#8c1a2c;"></div><div class="abs" style="left:70.5px;top:21.299999999999997px;width:5px;height:9px;background:#c08a6a;"></div><div class="abs" style="left:72px;top:23.299999999999997px;width:2px;height:4px;background:#f0e0d0;"></div><div class="abs" style="left:68px;top:35.7px;width:10px;height:0.9px;background:#999;"></div><div class="abs" style="left:65px;top:45.89999999999999px;width:14.2px;height:9px;background:#f4f9fc;border:0.8px solid #9fd6ea;box-sizing:border-box"></div><div class="abs" style="left:71px;top:47.8px;width:2.4px;height:2.2px;background:#d86060;"></div><div class="abs" style="left:67px;top:51.3px;width:8px;height:0.8px;background:#bbb;"></div><div class="abs" style="left:66px;top:56.10000000000001px;width:12px;height:0.9px;background:#999;"></div><div class="abs" style="left:12.699999999999989px;top:110.7px;width:23.5px;height:1px;background:#666;"></div><div class="abs" style="left:16px;top:112.7px;width:17px;height:0.9px;background:#777;"></div><div class="abs" style="left:55px;top:110.7px;width:20.3px;height:1px;background:#666;"></div><div class="abs" style="left:57px;top:112.7px;width:16px;height:0.9px;background:#777;"></div></div>
<svg style="filter:blur(0.45px);left:267.7px;top:104.5px" width="29.3" height="21.2" viewBox="0 0 29.3 21.2">
<rect width="29.3" height="21.2" fill="#4a3a38"/>
<rect x="0" y="0" width="29.3" height="9.5" fill="#d9c8b4"/>
<rect x="0" y="0" width="5" height="10" fill="#eee8e2"/>
<rect x="6" y="1.6" width="20" height="6.4" fill="#c4402c"/>
<rect x="8" y="3" width="16" height="1.2" fill="#e8a060"/>
<rect x="0" y="9.5" width="29.3" height="3" fill="#7a5a4c"/>
<rect x="0" y="12.5" width="29.3" height="8.7" fill="#3a2e30"/>
<path d="M2 14.5h25M1 16.5h27M2 18.5h26" stroke="#6e6264" stroke-width="0.8" stroke-dasharray="1.2 1.1"/>
</svg>
<svg style="filter:blur(0.45px);left:310.0px;top:104.5px" width="28.2" height="21.2" viewBox="0 0 28.2 21.2">
<rect width="28.2" height="21.2" fill="#dcd8d4"/>
<path d="M0 0H28.2V3L10 1.5L0 5Z" fill="#c8ccc8"/>
<path d="M6 4.5L28.2 1V9.5H6Z" fill="#b81e2a"/>
<rect x="0" y="4" width="6" height="9" fill="#9a9894"/>
<rect x="2" y="9.5" width="26.2" height="3.4" fill="#3a3436"/>
<path d="M1 12.6L28.2 11.6V17.5L2 18.5Z" fill="#c8202e"/>
<rect x="0" y="18.6" width="28.2" height="2.6" fill="#e2e0dc"/>
</svg>
<div class="book" style="left:18px;top:207.0px"><div class="abs" style="left:7.599999999999994px;top:10.199999999999989px;width:76.4px;height:0.8px;background:#6a6a6a;"></div><div class="abs" style="left:7.599999999999994px;top:8px;width:1.8px;height:1.8px;background:#666;"></div><div class="abs" style="left:30.69999999999999px;top:8.399999999999977px;width:31.4px;height:1.2px;background:#b0b0b0;"></div><div class="abs" style="left:17.5px;top:19.19999999999999px;width:58px;height:2.8px;background:#666;"></div><div class="abs" style="left:42.39999999999998px;top:25.30000000000001px;width:6.4px;height:1.1px;background:#a4a4a4;"></div><div class="abs" style="left:22px;top:27.600000000000023px;width:44px;height:1.1px;background:#b4b4b4;"></div><div class="abs" style="left:9.199999999999989px;top:30.80000000000001px;width:74px;height:14px;background:repeating-linear-gradient(180deg,#a8a8a8 0,#a8a8a8 1.15px,transparent 1.15px,transparent 2.04px);"></div><div class="abs" style="left:9.199999999999989px;top:30.80000000000001px;width:4px;height:1.3px;background:#555;"></div><div class="abs" style="left:9.199999999999989px;top:45.30000000000001px;width:28px;height:1.2px;background:#8a8a8a;"></div><div class="abs" style="left:9.199999999999989px;top:47.60000000000002px;width:41px;height:1.2px;background:#8a8a8a;"></div><div class="abs" style="left:8px;top:51.80000000000001px;width:75.2px;height:1.8px;background:#7c7c7c;"></div><div class="abs" style="left:24.399999999999977px;top:55.30000000000001px;width:41.6px;height:1.8px;background:#7c7c7c;"></div><div class="abs" style="left:39.30000000000001px;top:61px;width:11px;height:1.2px;background:#999;"></div><div class="abs" style="left:24.399999999999977px;top:63.39999999999998px;width:41.6px;height:1.1px;background:#b4b4b4;"></div><div class="abs" style="left:28.30000000000001px;top:65.60000000000002px;width:33px;height:1.1px;background:#b4b4b4;"></div><div class="abs" style="left:7.199999999999989px;top:69.69999999999999px;width:76px;height:26.4px;background:repeating-linear-gradient(180deg,#a8a8a8 0,#a8a8a8 1.15px,transparent 1.15px,transparent 2.03px);"></div><div class="abs" style="left:7.199999999999989px;top:96.10000000000002px;width:27.4px;height:1.15px;background:#a8a8a8;"></div><div class="abs" style="left:7.199999999999989px;top:69.69999999999999px;width:6px;height:1.3px;background:#555;"></div><div class="abs" style="left:7.199999999999989px;top:99px;width:49.3px;height:1.4px;background:#7c7c7c;"></div><div class="abs" style="left:7.199999999999989px;top:105.19999999999999px;width:10.2px;height:2.1px;background:#5a5a5a;"></div><div class="abs" style="left:47.10000000000002px;top:102.89999999999998px;width:36.1px;height:9.6px;background:repeating-linear-gradient(180deg,#a6a6a6 0,#a6a6a6 1.1px,transparent 1.1px,transparent 2.0px);"></div><div class="abs" style="left:11px;top:110.5px;width:33px;height:1.3px;background:#a6a6a6;"></div><div class="abs" style="left:7.199999999999989px;top:113.30000000000001px;width:21px;height:0.7px;background:#999;"></div><div class="abs" style="left:7.199999999999989px;top:114.19999999999999px;width:75.4px;height:4.2px;background:repeating-linear-gradient(180deg,#a2a2a2 0,#a2a2a2 1.4px,transparent 1.4px,transparent 2.4px);"></div></div>
<div class="book" style="left:138px;top:207.0px"><div class="abs" style="left:19.69999999999999px;top:15.600000000000023px;width:3px;height:2.2px;background:#eca4ac;"></div><div class="abs" style="left:25.30000000000001px;top:15.600000000000023px;width:3px;height:2.2px;background:#eca4ac;"></div><div class="abs" style="left:13.5px;top:38.19999999999999px;width:22px;height:1.5px;background:#9c9cb4;"></div><div class="abs" style="left:74px;top:46.60000000000002px;width:8.4px;height:0.9px;background:#b8b8b8;"></div><div class="abs" style="left:7px;top:49px;width:35px;height:63px;background:repeating-linear-gradient(180deg,#d6d6d6 0,#d6d6d6 1.1px,transparent 1.1px,transparent 2.15px);"></div><div class="abs" style="left:46.60000000000002px;top:49px;width:36px;height:41px;background:repeating-linear-gradient(180deg,#d6d6d6 0,#d6d6d6 1.1px,transparent 1.1px,transparent 2.15px);"></div><div class="abs" style="left:50px;top:90.89999999999998px;width:21px;height:6.4px;background:repeating-linear-gradient(180deg,#d6d6d6 0,#d6d6d6 1.1px,transparent 1.1px,transparent 2.15px);"></div><div class="abs" style="left:65px;top:106.19999999999999px;width:10px;height:1.3px;background:#c4c4c4;"></div></div>
<svg style="left:184.6px;top:217.2px" width="36.8" height="35.6" viewBox="0 0 36.8 35.6">
<defs><linearGradient id="ph" x1="0" y1="0.3" x2="1" y2="0"><stop offset="0" stop-color="#dcc6ae"/><stop offset="0.45" stop-color="#b89274"/><stop offset="1" stop-color="#5e4234"/></linearGradient>
<clipPath id="pc"><rect width="36.8" height="35.6"/></clipPath></defs>
<g clip-path="url(#pc)"><g style="filter:blur(0.5px)">
<rect x="-2" y="-2" width="41" height="40" fill="url(#ph)"/>
<path d="M0 35.6V27.2C4 25.6 8 25 11.7 24.2L25 24.2C29 25 33 26 36.8 27.7V35.6Z" fill="#28232a"/>
<path d="M13.6 25L17 35.6H20.5L23 25Z" fill="#eceae8"/>
<path d="M17.3 28.5h2.4l0.9 7.1h-4.2z" fill="#2a2c44"/>
<ellipse cx="18.8" cy="16" rx="7.7" ry="10.3" fill="#dcb79e"/>
<path d="M10.4 13.5C9.6 2.5 28 2.5 27.2 13.5C25.6 8.5 23 7.3 18.8 7.3C14.600000000000001 7.3 12 8.5 10.4 13.5Z" fill="#e9e6df"/>
<path d="M12.4 15.8h5M20.2 15.8h5" stroke="#7a5c4c" stroke-width="1.5"/>
<path d="M16 22.4h5.6" stroke="#b88874" stroke-width="0.8"/>
</g></g></svg>
<div class="book" style="left:258px;top:207.0px"><div class="abs" style="left:26px;top:22px;width:41px;height:1.5px;background:#b4b4b4;"></div><div class="abs" style="left:36px;top:27px;width:20px;height:13px;background:repeating-linear-gradient(180deg,#d2d2d2 0,#d2d2d2 1.1px,transparent 1.1px,transparent 2.3px);"></div><div class="abs" style="left:34px;top:43px;width:24px;height:1px;background:#c4c4c4;"></div><div class="abs" style="left:43px;top:48px;width:6px;height:1px;background:#aaa;"></div><div class="abs" style="left:23px;top:51px;width:47px;height:10px;background:repeating-linear-gradient(180deg,#cfcfcf 0,#cfcfcf 1.1px,transparent 1.1px,transparent 2.1px);"></div><div class="abs" style="left:12px;top:67px;width:20px;height:1.5px;background:#b4b4b4;"></div><div class="abs" style="left:12px;top:71px;width:66px;height:7px;background:repeating-linear-gradient(180deg,#dadada 0,#dadada 1.1px,transparent 1.1px,transparent 2.1px);"></div><div class="abs" style="left:12px;top:81px;width:18px;height:1.5px;background:#b4b4b4;"></div><div class="abs" style="left:12px;top:84px;width:66px;height:6px;background:repeating-linear-gradient(180deg,#dadada 0,#dadada 1.1px,transparent 1.1px,transparent 2.1px);"></div><div class="abs" style="left:12px;top:93px;width:16px;height:1.5px;background:#b4b4b4;"></div><div class="abs" style="left:12px;top:96px;width:66px;height:5px;background:repeating-linear-gradient(180deg,#c8c8c8 0,#c8c8c8 1.1px,transparent 1.1px,transparent 2.1px);"></div><div class="abs" style="left:43px;top:107px;width:3px;height:1px;background:#bbb;"></div></div>
</div>
<div id="sb"></div>
<div class="abs" style="left:588px;top:75.5px;width:11.5px;height:308px;background:linear-gradient(90deg,#cfe4f6,#dcecfa 45%,#d3e6f7);box-shadow:0 0 0 0.6px #bdd6ec;border-radius:1px"></div>
<div class="abs" style="left:592px;top:231.5px;width:4px;height:5px;background:repeating-linear-gradient(180deg,#7fa8d4 0,#7fa8d4 1px,transparent 1px,transparent 2px)"></div>
<svg style="left:590px;top:67px" width="7" height="4.5" viewBox="0 0 9 6"><path d="M0 5.400000000000001L4.5 0.4L9 5.4z" fill="#4d86c8"/></svg>
<svg style="left:590px;top:418.5px" width="7" height="4.5" viewBox="0 0 9 6"><path d="M0 0.4L4.5 5.4L9 0.4z" fill="#4d86c8"/></svg>
<div id="lline"></div>
<div id="bline"></div>

</div>
</body></html>
